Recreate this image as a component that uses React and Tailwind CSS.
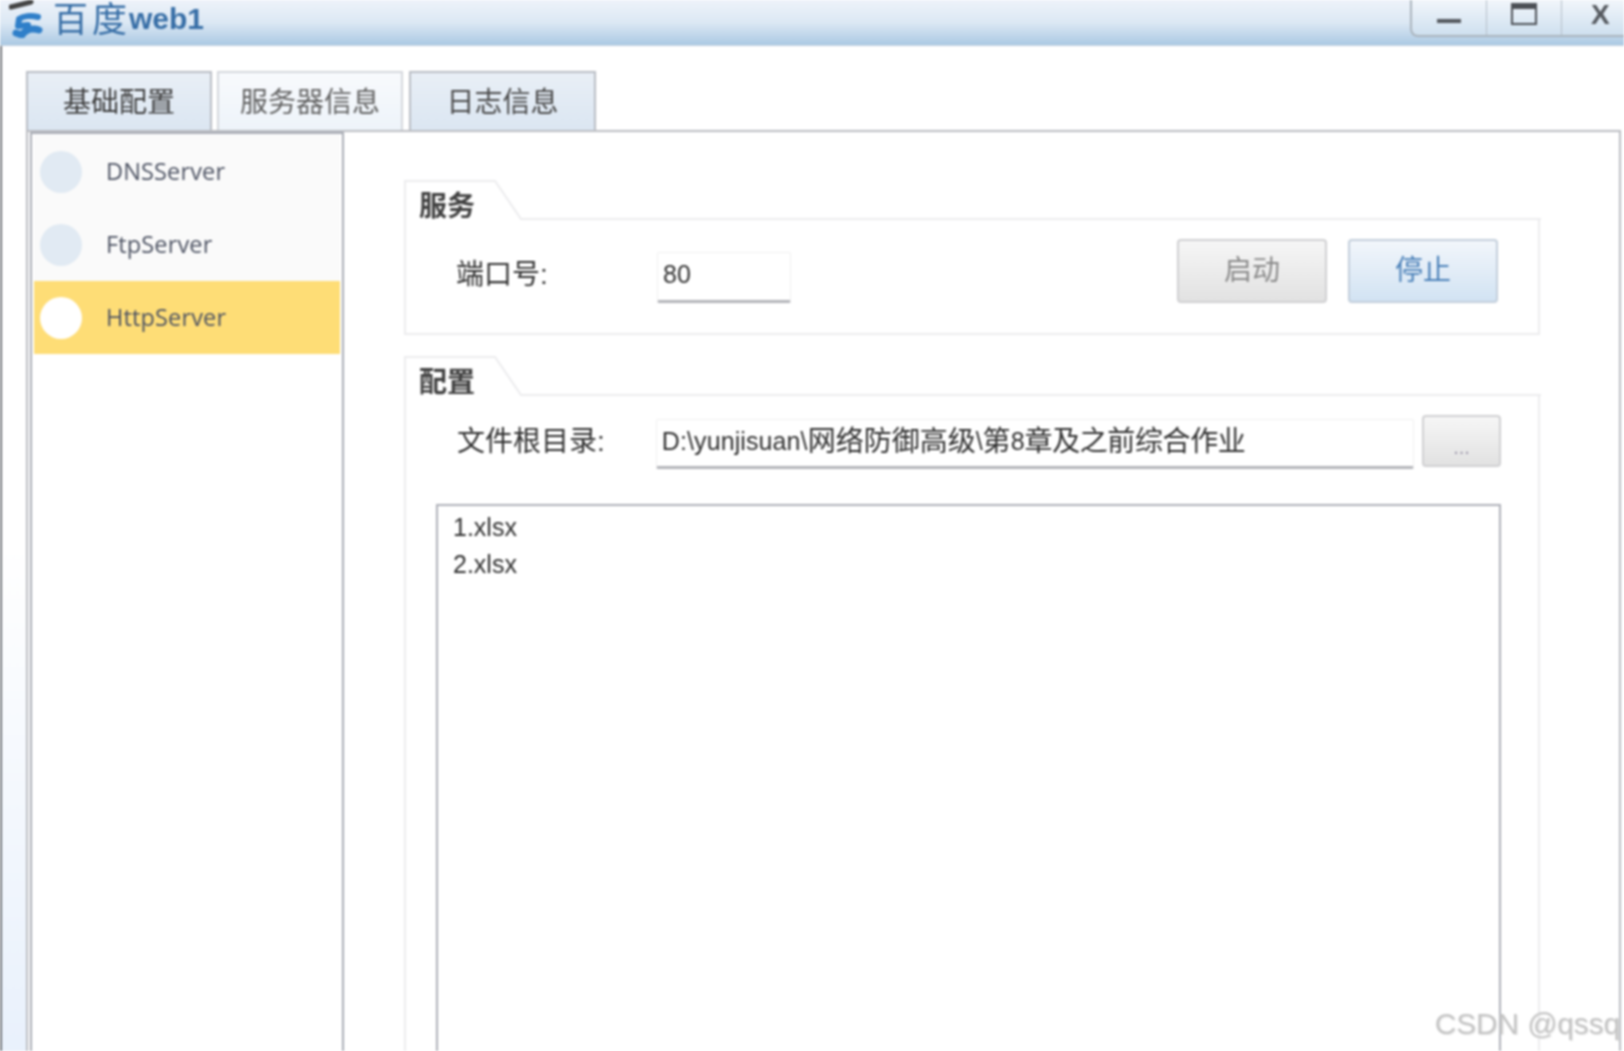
import React from 'react'

const cjk = '"Liberation Sans","Noto Sans CJK SC",sans-serif'

const GroupHeader = ({ title }) => {
  return (
    <div className="relative h-[40px] w-full">
      <svg className="absolute left-0 top-0" width="1137" height="40" fill="none" stroke="#ececee" strokeWidth="2">
        <path d="M1 40 V1 H91 L117 39 H1137" />
      </svg>
      <span className="absolute left-[15px] top-[7px] text-[28px] leading-[40px] font-bold text-[#404040]">{title}</span>
    </div>
  )
}

const ServerItem = ({ name, active }) => {
  return (
    <div className={active ? 'flex items-center h-[73px] bg-[#fedd76]' : 'flex items-center h-[73px] bg-[#fafafa]'}>
      <div className={active ? 'ml-[6px] w-[42px] h-[42px] rounded-full bg-white' : 'ml-[6px] w-[42px] h-[42px] rounded-full bg-[#e1eaf3]'}></div>
      <span className="ml-[24px] font-['Open_Sans'] text-[23.5px] tracking-[0.15px] text-[#4c5262]">{name}</span>
    </div>
  )
}

export default function App() {
  return (
    <div className="relative flex flex-col w-[1624px] h-[1051px] overflow-hidden bg-white blur-[0.9px]" style={{ fontFamily: cjk }}>
      {/* title bar */}
      <div className="flex justify-between h-[46px] shrink-0 bg-gradient-to-b from-[#eef3fa] via-[#dce8f4] to-[#abc9e3] border-b border-[#c5d3df]">
        <div className="flex items-center h-[38px]">
          <svg className="ml-[9px]" width="34" height="38" viewBox="0 0 34 38" fill="none">
            <path d="M2 7 L22 2" stroke="#444" strokeWidth="5" strokeLinecap="round" />
            <path d="M29 17 C22 15 14 16 10 19 L9 26 L19 25" stroke="#2f7fc9" strokeWidth="6" strokeLinecap="round" strokeLinejoin="round" />
            <path d="M30 30 C24 28 17 29 13 35 L7 33" stroke="#2f7fc9" strokeWidth="7" strokeLinecap="round" strokeLinejoin="round" />
          </svg>
          <span className="ml-[10px] text-[35px] leading-none tracking-[4px] text-[#376ea6]">百度</span>
          <span className="ml-[-2px] text-[30px] leading-none font-bold text-[#376ea6]">web1</span>
        </div>
        <div className="flex h-[37px] w-[214px] rounded-bl-[8px] border-l-2 border-b-2 border-[#aab4bd] bg-gradient-to-b from-[#f2f6fb] to-[#cfe0ef]">
          <div className="flex items-end justify-center pb-[12px] w-[75px] border-r border-[#b4bec8]">
            <div className="w-[24px] h-[4px] bg-[#55595f]"></div>
          </div>
          <div className="flex items-start justify-center pt-[3px] w-[75px] border-r border-[#b4bec8]">
            <svg width="26" height="22" viewBox="0 0 26 22" fill="none">
              <rect x="1" y="1" width="24" height="20" stroke="#4c5056" strokeWidth="2" />
              <rect x="1" y="1" width="24" height="5" fill="#4c5056" />
            </svg>
          </div>
          <div className="flex-1 pl-[29px] text-[28px] leading-[30px] font-bold text-[#55595f]">X</div>
        </div>
      </div>

      <div className="flex flex-1 min-h-0">
        {/* left window edge */}
        <div className="w-[26px] shrink-0 border-l-2 border-[#6f7378] bg-gradient-to-b from-white via-white to-[#e9f1fc]"></div>

        <div className="flex flex-col flex-1 min-w-0 pt-[25px] pr-[3px]">
          {/* tabs */}
          <div className="flex gap-[5px] h-[59px] shrink-0">
            <div className="flex items-center justify-center w-[186px] pt-[3px] border-2 border-b-0 border-[#b9bdc4] bg-gradient-to-b from-[#e9eff6] to-[#dbe6f2] text-[28px] text-[#3f3f3f]">基础配置</div>
            <div className="flex items-center justify-center w-[186px] pt-[3px] border-2 border-b-0 border-[#d4d7dc] bg-gradient-to-b from-[#f8fafd] to-[#eef4fa] text-[28px] text-[#626262]">服务器信息</div>
            <div className="flex items-center justify-center w-[187px] ml-[1px] pt-[3px] border-2 border-b-0 border-[#b9bdc4] bg-gradient-to-b from-[#e9eff6] to-[#dbe6f2] text-[28px] text-[#4a4a4a]">日志信息</div>
          </div>

          {/* tab pane */}
          <div className="flex flex-1 min-h-0 border-t-2 border-l-2 border-r-2 border-[#bbbdc2] bg-white pl-[2px]">
            <div className="w-[314px] shrink-0 border-2 border-b-0 border-[#a9adb6] px-[2px] pt-[1px] bg-white">
              <ServerItem name="DNSServer" />
              <ServerItem name="FtpServer" />
              <ServerItem name="HttpServer" active />
            </div>

            <div className="flex flex-col flex-1 min-w-0 pl-[60px] pr-[79px] pt-[48px]">
              {/* service group */}
              <GroupHeader title="服务" />
              <div className="flex items-start h-[115px] shrink-0 pl-[50px] pr-[40px] pt-[19px] border-x-2 border-b-2 border-[#ececee]">
                <span className="w-[201px] mt-[16px] text-[28px] leading-[40px] text-[#303030]">端口号:</span>
                <div className="flex items-center w-[134px] h-[51px] mt-[13px] pl-[5px] pb-[4px] border border-[#f0f0f0] border-b-[3px] border-b-[#b4b5ba] rounded-[2px] text-[25px] text-[#303030]">80</div>
                <div className="flex gap-[21px] ml-auto">
                  <div className="flex items-center justify-center w-[150px] h-[64px] border-2 border-[#d0d0d2] rounded-[4px] bg-gradient-to-b from-[#f6f6f6] to-[#e2e2e2] text-[28px] text-[#8a8a8a]">启动</div>
                  <div className="flex items-center justify-center w-[150px] h-[64px] border-2 border-[#c3cedb] rounded-[4px] bg-gradient-to-b from-[#f2f6fb] to-[#d2e3f3] text-[28px] text-[#4a80b8]">停止</div>
                </div>
              </div>

              {/* config group */}
              <div className="mt-[21px]">
                <GroupHeader title="配置" />
              </div>
              <div className="flex-1 min-h-0 pl-[30px] pr-[37px] pt-[19px] border-x-2 border-[#ececee]">
                <div className="flex items-start h-[52px] mb-[37px]">
                  <span className="w-[199px] ml-[21px] mt-[7px] text-[28px] leading-[40px] text-[#303030]">文件根目录:</span>
                  <div className="flex items-center w-[759px] h-[50px] mt-[4px] pl-[5px] pb-[2px] border border-[#f0f0f0] border-b-[3px] border-b-[#b4b5ba] rounded-[2px] text-[#303030] whitespace-nowrap">
                    <span className="text-[25px] tracking-[0.1px]">D:\yunjisuan\</span>
                    <span className="text-[28px]">网络防御高级</span>
                    <span className="text-[25px]">\</span>
                    <span className="text-[28px]">第</span>
                    <span className="text-[25px]">8</span>
                    <span className="text-[28px] tracking-[-0.4px]">章及之前综合作业</span>
                  </div>
                  <div className="flex items-end justify-center w-[79px] h-[52px] ml-[8px] pb-[6px] border-2 border-[#d0d0d2] rounded-[4px] bg-gradient-to-b from-[#f6f6f6] to-[#e2e2e2] text-[20px] leading-[24px] text-[#9a94a8]">...</div>
                </div>
                <div className="h-[560px] pl-[15px] pt-[3px] border-2 border-b-0 border-[#aeb0b8] text-[25px] leading-[37px] text-[#303030]">
                  <div>1.xlsx</div>
                  <div>2.xlsx</div>
                </div>
              </div>
            </div>
          </div>
        </div>
      </div>

      {/* watermark */}
      <span className="absolute right-[4px] top-[1007px] text-[29.7px] leading-[34px] text-[#c4c4c4] [text-shadow:1px_1px_1px_#e4e4e4]">CSDN @qssq</span>
    </div>
  )
}
